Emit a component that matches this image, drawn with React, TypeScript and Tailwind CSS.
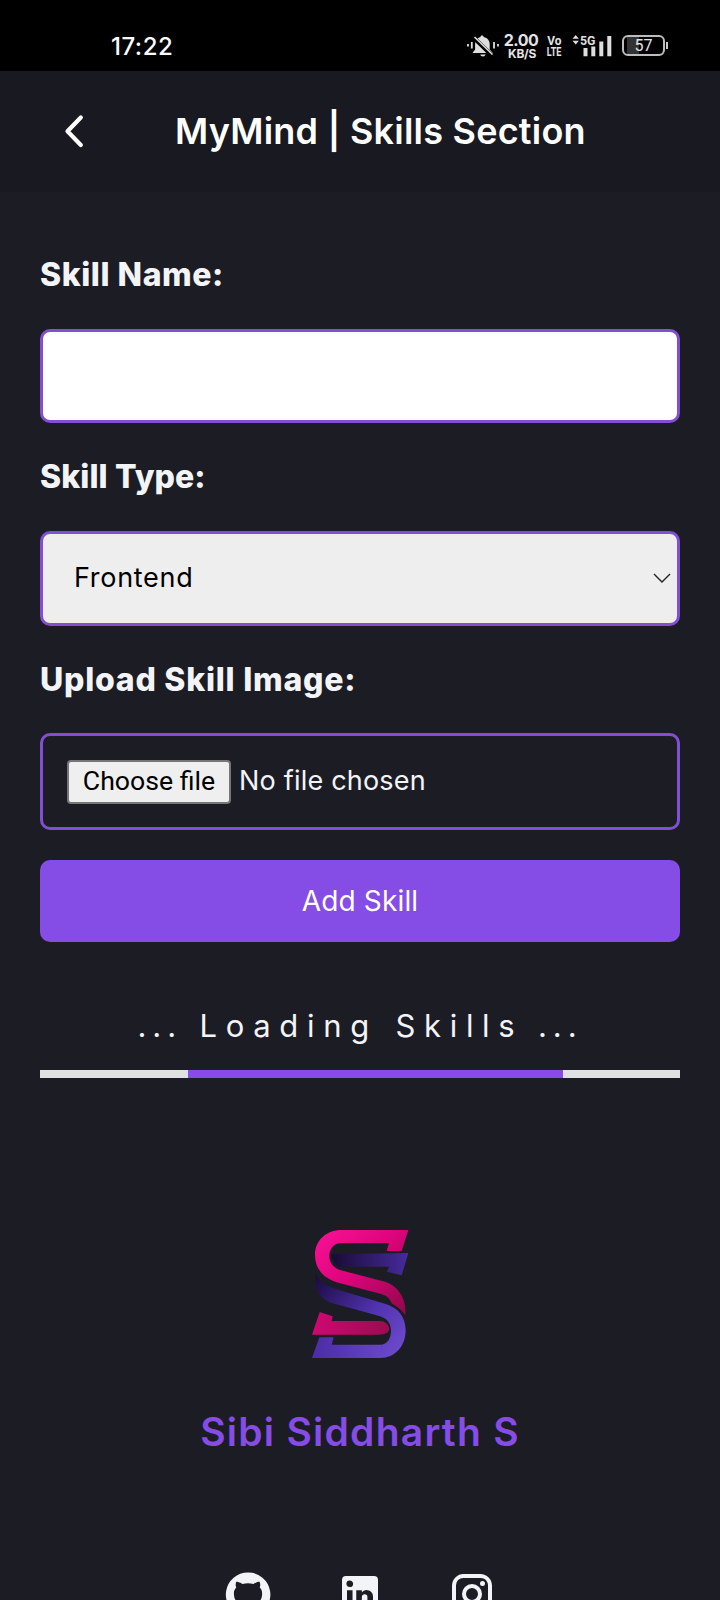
const GITHUB =
  "M12 1.27a11 11 0 00-3.48 21.46c.55.09.73-.28.73-.55v-1.84c-3.03.64-3.67-1.46-3.67-1.46-.55-1.29-1.28-1.65-1.28-1.65-.92-.65.1-.65.1-.65 1.1 0 1.73 1.1 1.73 1.1.92 1.65 2.57 1.2 3.21.92a2 2 0 01.64-1.47c-2.47-.27-5.04-1.19-5.04-5.5 0-1.1.46-2.1 1.2-2.84a3.76 3.76 0 010-2.93s.91-.28 3.11 1.1c1.8-.49 3.7-.49 5.5 0 2.1-1.38 3.02-1.1 3.02-1.1a3.76 3.76 0 01.1 2.93c.83.74 1.2 1.74 1.2 2.94 0 4.21-2.57 5.13-5.04 5.4.45.37.82.92.82 2.02v3.03c0 .27.1.64.73.55A11 11 0 0012 1.27";
const LINKEDIN =
  "M19 3a2 2 0 0 1 2 2v14a2 2 0 0 1-2 2H5a2 2 0 0 1-2-2V5a2 2 0 0 1 2-2h14m-.5 15.5v-5.3a3.26 3.26 0 0 0-3.26-3.26c-.85 0-1.84.52-2.32 1.3v-1.11h-2.79v8.37h2.79v-4.93c0-.77.62-1.4 1.39-1.4a1.4 1.4 0 0 1 1.4 1.4v4.93h2.79M6.88 8.56a1.68 1.68 0 0 0 1.68-1.68c0-.93-.75-1.69-1.68-1.69a1.69 1.69 0 0 0-1.69 1.69c0 .93.76 1.68 1.69 1.68m1.39 9.94v-8.37H5.5v8.37h2.77z";
const INSTAGRAM =
  "M7.8 2h8.4C19.4 2 22 4.6 22 7.8v8.4a5.8 5.8 0 0 1-5.8 5.8H7.8C4.6 22 2 19.4 2 16.2V7.8A5.8 5.8 0 0 1 7.8 2m-.2 2A3.6 3.6 0 0 0 4 7.6v8.8C4 18.39 5.61 20 7.6 20h8.8a3.6 3.6 0 0 0 3.6-3.6V7.6C20 5.61 18.39 4 16.4 4H7.6m9.65 1.5a1.25 1.25 0 0 1 1.25 1.25A1.25 1.25 0 0 1 17.25 8 1.25 1.25 0 0 1 16 6.75a1.25 1.25 0 0 1 1.25-1.25M12 7a5 5 0 0 1 5 5 5 5 0 0 1-5 5 5 5 0 0 1-5-5 5 5 0 0 1 5-5m0 2a3 3 0 0 0-3 3 3 3 0 0 0 3 3 3 3 0 0 0 3-3 3 3 0 0 0-3-3z";

function StatusBar() {
  return (
    <div className="flex h-[71px] shrink-0 items-start bg-black pl-[111px] text-[#e4e4e4]">
      <span className="mt-[32px] w-[355px] text-[24px] leading-[30px] font-medium tracking-[0.5px] text-white">17:22</span>
      <svg className="mt-[34px] h-6 w-[34px]" viewBox="0 0 34 24" fill="#dedede">
        <path d="M16 1.5c1 0 1.6.6 1.7 1.5 4 .9 6 3.800 6 7.500v5l3 3.500H6.500l2.600-3.500v-5c0-3.700 2-6.600 5.300-7.500.1-.9.600-1.500 1.600-1.500zM14.200 20.500h5.400c-.4 1.300-1.300 2-2.700 2s-2.300-.7-2.700-2z" />
        <path d="M7.500 3.500 26 21.500" stroke="#000" strokeWidth="4.200" />
        <path d="M8.500 3 26.500 20.500" stroke="#dedede" strokeWidth="1.600" />
        <path d="M5.800 8v6.500M28 8v6.500M2 10v2.500M32 10v2.500" stroke="#dedede" strokeWidth="1.800" />
      </svg>
      <div className="mt-[33px] ml-[2px] flex w-[38px] flex-col items-center font-bold">
        <span className="text-[16px] leading-[15px] tracking-[-0.500px]">2.00</span>
        <span className="ml-[2px] text-[12px] leading-[11px] tracking-[-0.300px]">KB/S</span>
      </div>
      <div className="mt-[35px] ml-[6px] flex w-[16px] flex-col items-center font-[Roboto] text-[12.500px] leading-[11px] font-bold">
        <span className="scale-x-[0.95]">Vo</span>
        <span className="scale-x-[0.72]">LTE</span>
      </div>
      <svg className="mt-[34px] ml-[10px] h-6 w-10 overflow-visible" viewBox="0 0 40 24" fill="#dedede">
        <path d="M.500 4.800 3.700 1l3.200 3.800zM.500 6.700h6.400L3.700 10.500z" />
        <text x="8" y="11" fontSize="13.500" fontWeight="700" fontFamily="Roboto" textLength="15.500" lengthAdjust="spacingAndGlyphs">5G</text>
        <path d="M11.500 14h4v8.300h-4zM19.300 12.500h4v9.800h-4zM27.300 7.500h4v14.800h-4zM35.300 2h4v20.300h-4z" />
      </svg>
      <div className="mt-[35px] ml-[10px] flex items-center">
        <div className="flex h-[21px] w-[43px] items-center justify-center rounded-[6px] border-2 border-[#bdbdbd] bg-[linear-gradient(90deg,#000_3px,#333_3px,#333_15px,#000_15px)] font-[Roboto] text-[16px] leading-none">
          57
        </div>
        <div className="ml-px h-[7px] w-[1.500px] bg-[#c9c9c9]" />
      </div>
    </div>
  );
}

function Logo() {
  return (
    <svg className="mx-auto mt-[132px] h-40 w-[140px]" viewBox="0 0 420 480">
      <defs>
        <linearGradient id="pink" x1="0" y1="0" x2="1" y2="1">
          <stop offset="0" stopColor="#fb1296" />
          <stop offset=".45" stopColor="#dd047c" />
          <stop offset="1" stopColor="#8d0848" />
        </linearGradient>
        <linearGradient id="foot" x1="0" y1="0" x2="1" y2="0">
          <stop offset="0" stopColor="#cf0872" />
          <stop offset="1" stopColor="#9c0b50" />
        </linearGradient>
        <linearGradient id="arm" x1="0" y1="0" x2="1" y2="0">
          <stop offset="0" stopColor="#180b35" />
          <stop offset="1" stopColor="#472b9b" />
        </linearGradient>
        <linearGradient id="violet" x1="0" y1="0" x2="1" y2=".8">
          <stop offset="0" stopColor="#180a3c" />
          <stop offset=".6" stopColor="#5132af" />
          <stop offset="1" stopColor="#6b49cb" />
        </linearGradient>
        <linearGradient id="base" x1="0" y1="0" x2="1" y2="0">
          <stop offset="0" stopColor="#4a2ca3" />
          <stop offset="1" stopColor="#6545c4" />
        </linearGradient>
      </defs>
      <path d="M125 133 355 129 335 196 290 185 298 170H145C132 160 125 148 125 133z" fill="url(#arm)" />
      <path d="M89 306 128 319 125 333H270C290 333 300 350 297 361 292 370 285 374 265 374H66z" fill="url(#foot)" />
      <path d="M77 190C90 222 118 230 150 241L285 281C325 292 347 322 347 360 347 408 316 444 270 444V404C292 404 303 385 303 362 303 342 292 323 265 317L140 283C90 272 73 245 77 190z" fill="url(#violet)" />
      <path d="M88 382H131L125 404H271V444H66z" fill="url(#base)" />
      <path d="M355 60 335 123H290L297 99H155C110 99 103 165 150 180L285 215C325 228 350 265 346 316 337 302 325 292 305 280 297 259 282 254 265 250L145 218C98 205 75 175 75 135 75 90 110 60 155 60z" fill="url(#pink)" />
    </svg>
  );
}

function Social({ d }: { d: string }) {
  return (
    <svg className="size-12 shrink-0" viewBox="0 0 24 24" fill="#f3f4f8">
      <path d={d} />
    </svg>
  );
}

export default function App() {
  return (
    <div className="flex h-[1600px] w-[720px] flex-col overflow-hidden bg-[#1c1c25] font-['Inter',sans-serif] text-[#f3f4f8]">
      <StatusBar />
      <header className="flex h-[121px] shrink-0 items-center bg-[#191921] pb-px pl-[64px] text-white">
        <svg className="h-[34px] w-5" viewBox="0 0 20 34" fill="none" stroke="#fff" strokeWidth="4.200" strokeLinecap="round" strokeLinejoin="round">
          <path d="M16.800 3.500 3.500 17.300 16.800 31" />
        </svg>
        <h1 className="ml-[91px] text-[36px] leading-[44px] font-semibold tracking-[0.220px] whitespace-nowrap">MyMind | Skills Section</h1>
      </header>
      <main className="flex shrink-0 flex-col px-10 pt-[60px]">
        <label className="mb-[31px] h-[46px] text-[32px] leading-[46px] font-extrabold tracking-[0.550px]">Skill Name:</label>
        <div className="h-[94px] rounded-[10px] border-3 border-[#824fd2] bg-white" />
        <label className="mt-[31px] mb-[30.500px] h-[46px] text-[32px] leading-[46px] font-extrabold tracking-[0.100px]">Skill Type:</label>
        <div className="flex h-[95px] items-center justify-between rounded-[10px] border-3 border-[#824fd2] bg-[#eee] pr-[6px] pl-[31px] text-black">
          <span className="pt-px text-[27px] tracking-[0.700px]">Frontend</span>
          <svg className="h-3 w-[18px]" viewBox="0 0 18 12" fill="none" stroke="#222" strokeWidth="1.400">
            <path d="m1 2 8 8 8-8" />
          </svg>
        </div>
        <label className="mt-[31px] mb-[30px] h-[46px] text-[32px] leading-[46px] font-extrabold tracking-[0.750px]">Upload Skill Image:</label>
        <div className="flex h-[97px] items-center rounded-[10px] border-3 border-[#824fd2] pt-px pl-[24px]">
          <button className="h-[44px] w-[164px] rounded-[4px] border-2 border-[#767676] bg-[#efefef] font-[Roboto] text-[26.670px] leading-none whitespace-nowrap text-black">
            Choose file
          </button>
          <span className="ml-[8px] text-[27px] tracking-[0.200px]">No file chosen</span>
        </div>
        <button className="mt-[30px] h-[82px] rounded-[10px] bg-[#854ce6] text-[28px] tracking-[0.150px] text-white">Add Skill</button>
        <p className="mt-[61px] h-[46px] text-center text-[31px] leading-[46px] tracking-[5.900px] whitespace-pre">
          ...<span className="tracking-[8.700px]">{" Loading Skills"}</span>
          {" ..."}
        </p>
        <div className="mt-[21px] flex h-2 bg-[#e0e1e3] pl-[148px]">
          <div className="w-[375px] bg-[#854ce6]" />
        </div>
      </main>
      <footer className="flex shrink-0 flex-col">
        <Logo />
        <h2 className="mt-[38px] h-[48px] text-center text-[39px] leading-[48px] font-semibold tracking-[1.250px] text-[#854ce6]">Sibi Siddharth S</h2>
        <div className="mt-[114px] flex justify-center gap-16">
          <Social d={GITHUB} />
          <Social d={LINKEDIN} />
          <Social d={INSTAGRAM} />
        </div>
      </footer>
    </div>
  );
}
